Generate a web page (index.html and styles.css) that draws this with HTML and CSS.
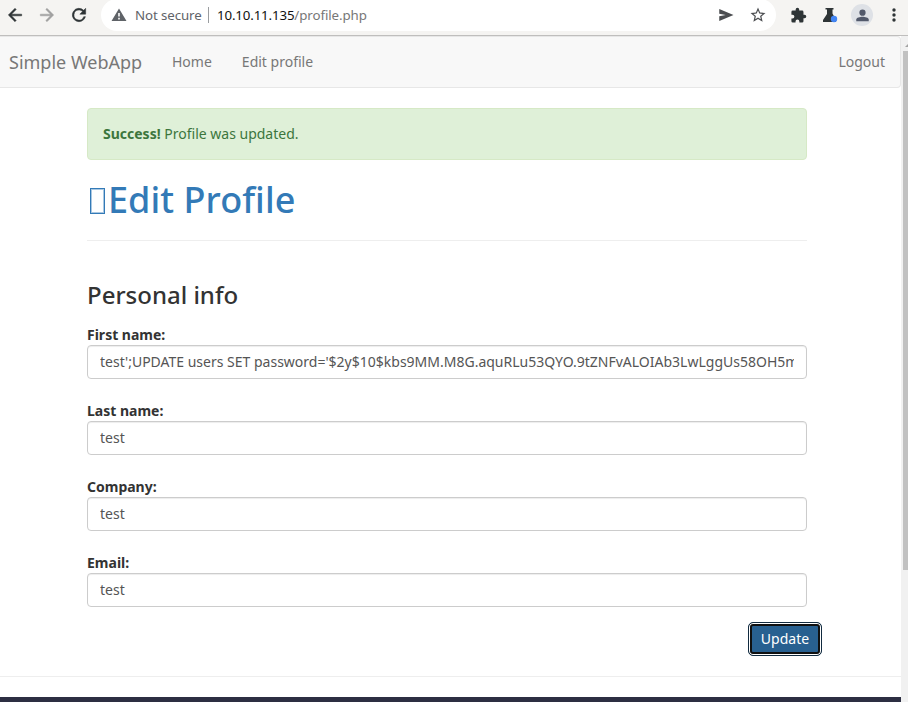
FILE: index.html
```html
<!DOCTYPE html>
<html lang="en">
<head>
<meta charset="utf-8">
<title>Edit Profile</title>
<link rel="stylesheet" href="styles.css">
</head>
<body>
<header class="toolbar">
  <svg class="nav-icon" viewBox="0 0 24 24"><path d="M20 11H7.83l5.59-5.59L12 4l-8 8 8 8 1.41-1.41L7.83 13H20z"/></svg>
  <svg class="nav-icon faded" viewBox="0 0 24 24"><path d="M12 4l-1.41 1.41L16.17 11H4v2h12.17l-5.58 5.59L12 20l8-8z"/></svg>
  <svg class="nav-icon" viewBox="0 0 24 24"><path d="M17.65 6.35A8 8 0 1 0 19.73 14h-2.08A6 6 0 1 1 12 6c1.66 0 3.14.69 4.22 1.78L13 11h7V4z"/></svg>
  <div class="omnibox">
    <svg class="warn" viewBox="0 0 16 14"><path fill-rule="evenodd" d="M8 .5L15.5 13H.5zM7.2 5v3.6h1.6V5zM7.2 9.8v1.6h1.6V9.8z"/></svg>
    <span class="security">Not secure</span>
    <span class="divider"></span>
    <span class="url"><span class="host">10.10.11.135</span><span class="path">/profile.php</span></span>
    <svg class="send" viewBox="0 0 24 24"><path d="M3 20v-6.200l8.500-1.800L3 10.200V4l19 8z"/></svg>
    <svg class="star" viewBox="0 0 24 24"><path d="M22 9.24l-7.19-.62L12 2 9.19 8.63 2 9.24l5.46 4.73L5.82 21 12 17.27 18.18 21l-1.63-7.03zM12 15.4l-3.76 2.27 1-4.28-3.32-2.88 4.38-.38L12 6.1l1.71 4.04 4.38.38-3.32 2.88 1 4.28z"/></svg>
  </div>
  <svg class="puzzle" viewBox="0 0 24 24"><path d="M20.5 11H19V7a2 2 0 0 0-2-2h-4V3.500a2.500 2.500 0 0 0-5 0V5H4a2 2 0 0 0-2 2v3.800h1.500a2.700 2.700 0 0 1 0 5.400H2V20a2 2 0 0 0 2 2h3.800v-1.500a2.700 2.700 0 0 1 5.400 0V22H17a2 2 0 0 0 2-2v-4h1.500a2.500 2.500 0 0 0 0-5z"/></svg>
  <svg class="flask" viewBox="0 0 16 16"><path d="M3.500 1h8v1.500h-1V6.500L14 13v2H1v-2L5 7V2.500H3.500z"/><circle cx="12" cy="12" r="3.200"/></svg>
  <div class="avatar"><svg viewBox="0 0 24 24"><circle cx="12" cy="7.500" r="5"/><path d="M2 21v-2.500C2 15.500 8 14 12 14s10 1.500 10 4.500V21z"/></svg></div>
  <svg class="more" viewBox="0 0 4 14"><circle cx="2" cy="2" r="1.700"/><circle cx="2" cy="7" r="1.700"/><circle cx="2" cy="12" r="1.700"/></svg>
</header>
<div class="viewport">
  <div class="page">
    <nav class="navbar">
      <a class="brand">Simple WebApp</a>
      <a class="link">Home</a>
      <a class="link">Edit profile</a>
      <a class="link logout">Logout</a>
    </nav>
    <main class="container">
      <div class="alert"><strong>Success!</strong> Profile was updated.</div>
      <h1><span class="glyph"></span>Edit Profile</h1>
      <hr>
      <h3>Personal info</h3>
      <form>
        <label for="first">First name:</label>
        <input id="first" type="text" value="test';UPDATE users SET password='$2y$10$kbs9MM.M8G.aquRLu53QYO.9tZNFvALOIAb3LwLggUs58OH5mm">
        <label for="last">Last name:</label>
        <input id="last" type="text" value="test">
        <label for="company">Company:</label>
        <input id="company" type="text" value="test">
        <label for="email">Email:</label>
        <input id="email" type="text" value="test">
        <div class="actions"><button type="button">Update</button></div>
      </form>
    </main>
    <hr class="end">
    <footer></footer>
  </div>
  <div class="scrollbar"><span class="arrow"></span><span class="thumb"></span></div>
</div>
</body>
</html>
```
FILE: styles.css
```css
* { box-sizing: border-box; }
body {
  margin: 0;
  height: 702px;
  overflow: hidden;
  display: flex;
  flex-direction: column;
  background: #fff;
  color: #333;
  font: 14px/20px "Noto Sans", sans-serif;
}
svg { display: block; flex: none; }
.toolbar {
  flex: none;
  display: flex;
  align-items: center;
  height: 36px;
  padding: 0 0 5px 5px;
  background: #f5f4f2;
  border-bottom: 1px solid #bfbebd;
  fill: #2e3436;
}
.nav-icon { width: 20px; height: 20px; margin-right: 12px; stroke: #2e3436; stroke-width: .6; }
.faded { fill: #a0a0a0; stroke: #a0a0a0; }
.omnibox {
  display: flex;
  align-items: center;
  width: 675px;
  height: 32px;
  margin-top: -1px;
  padding: 0 9px 0 10px;
  border-radius: 16px;
  background: #fff;
  fill: #4b4d50;
}
.warn { width: 16px; height: 14px; margin-right: 8px; fill: #5f6368; }
.security { width: 73px; color: #5f6368; font-size: 13.3px; letter-spacing: -.1px; white-space: nowrap; }
.divider { width: 1px; height: 16px; margin-right: 8px; background: #9a9da0; }
.url { flex: 1; font-size: 13.3px; white-space: nowrap; }
.host { color: #111; letter-spacing: -.15px; }
.path { color: #777; letter-spacing: -.08px; }
.send { width: 18px; height: 18px; margin-right: 14px; }
.star { width: 18px; height: 18px; }
.puzzle { width: 17px; height: 17px; margin-left: 14px; }
.flask { width: 16px; height: 16px; margin-left: 15px; }
.flask circle { fill: #4285f4; }
.avatar {
  flex: none;
  display: grid;
  place-items: center;
  width: 22px;
  height: 22px;
  margin-left: 13px;
  border-radius: 50%;
  background: #dee1e6;
  fill: #52596b;
}
.avatar svg { width: 15px; height: 15px; }
.more { width: 4px; height: 14px; margin-left: 19px; }
.viewport { display: flex; height: 666px; }
.page { width: 901px; display: flex; flex-direction: column; }
.navbar {
  flex: none;
  display: flex;
  align-items: center;
  height: 52px;
  padding: 0 15px 0 9px;
  background: #f8f8f8;
  border: 1px solid #e7e7e7;
  border-left: 0;
  border-radius: 0 4px 4px 0;
  color: #777;
}
.brand { width: 163px; font-size: 18px; }
.link { margin-right: 30px; }
.logout { margin: 0 0 0 auto; }
.container { width: 720px; margin: 20px 0 0 87px; }
.alert {
  height: 52px;
  padding: 15px;
  background: #dff0d8;
  border: 1px solid #d6e9c6;
  border-radius: 4px;
  color: #3c763d;
}
h1 {
  display: flex;
  align-items: center;
  height: 40px;
  margin: 20px 0;
  color: #337ab7;
  font-size: 36px;
  font-weight: 500;
  line-height: 40px;
  letter-spacing: .06px;
}
.glyph { width: 15px; height: 26px; margin: 2px 3px 0; border: 1px solid #337ab7; box-shadow: inset 0 0 0 1px #aac8e2; }
hr { height: 1px; margin: 0; border: 0; background: #eee; }
h3 { margin: 40px 0 17px; font-size: 24px; font-weight: 500; line-height: 27px; }
label { display: block; font-weight: 700; }
input {
  display: block;
  width: 100%;
  height: 34px;
  margin-bottom: 22px;
  padding: 5px 12px 7px;
  border: 1px solid #ccc;
  border-radius: 4px;
  box-shadow: inset 0 1px 1px rgba(0, 0, 0, .075);
  color: #555;
  font: inherit;
}
.actions { display: flex; justify-content: flex-end; margin: -7px -15px 0 0; }
button {
  width: 74px;
  height: 34px;
  padding: 0;
  border: 1px solid #122b40;
  border-radius: 5px;
  background: #286090;
  box-shadow: inset 0 0 0 1px #fff, inset 0 0 0 3px #101010;
  color: #fff;
  font: inherit;
}
.end { flex: none; margin-top: 20px; }
footer { flex: none; height: 5px; margin-top: 20px; background: #2d2f42; }
.scrollbar { width: 7px; padding-left: 2px; background: #f1f1f1; overflow: hidden; }
.arrow { display: block; height: 15px; overflow: hidden; }
.arrow::before {
  content: "";
  display: block;
  width: 0;
  margin: 7px 0 0 2px;
  border: 4px solid transparent;
  border-top: 0;
  border-bottom-color: #a3a3a3;
}
.thumb { display: block; height: 519px; background: #c1c1c1; }
```
